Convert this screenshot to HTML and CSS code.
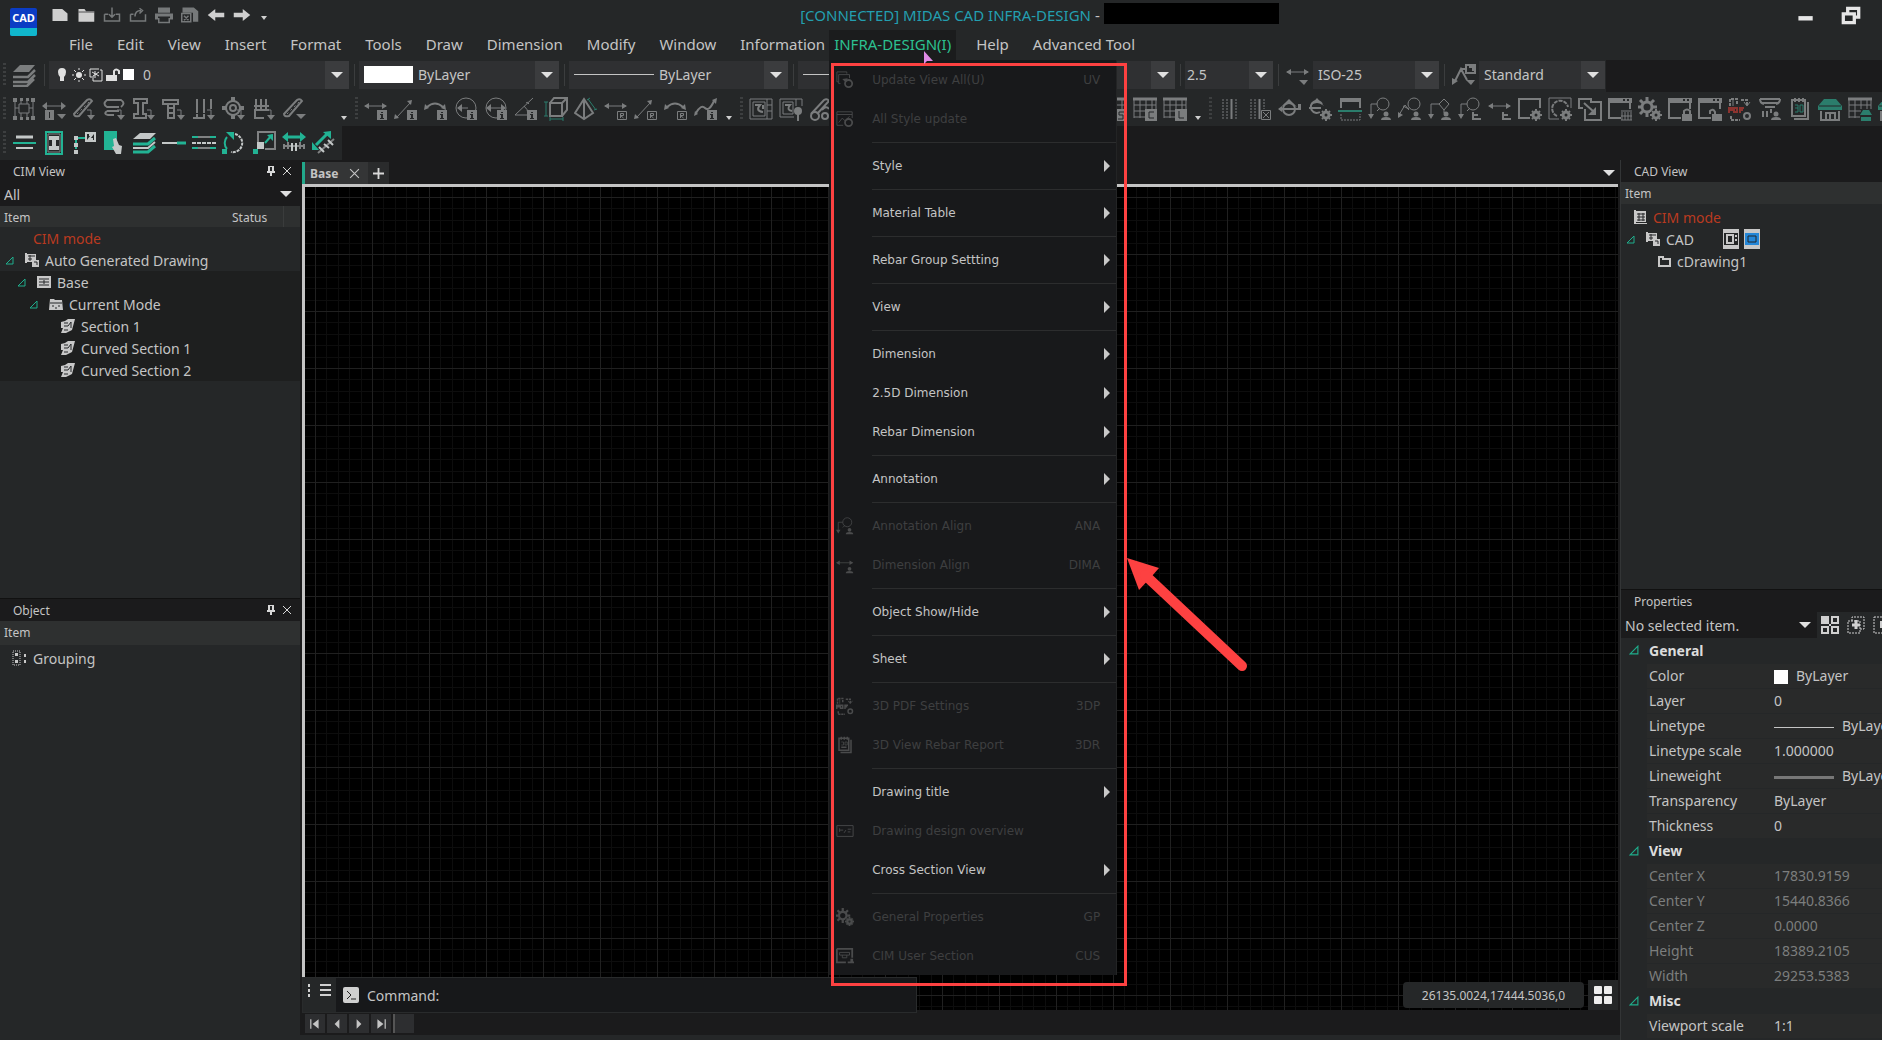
FILE: index.html
```
<!DOCTYPE html>
<html lang="en">

<head>
  <meta charset="UTF-8" />
  <meta name="viewport" content="width=device-width, initial-scale=1.0" />
  <title>MIDAS CAD INFRA-DESIGN</title>
  <link rel="stylesheet" href="styles.css">
</head>

<body>
  <!-- icon sprite -->
  <svg class="sprite" width="0" height="0" aria-hidden="true">
    <!-- small badges, drawn in the bottom right corner of other icons -->
    <symbol id="b-info" viewBox="0 0 24 24"><path class="fill" d="M13 13h10v10H13z"/><path class="hole" d="M17 15h2v1h-2zM16 17h3v4h1v1h-4v-1h1v-3h-1z"/></symbol>
    <symbol id="b-r" viewBox="0 0 24 24"><path d="M13.5 14.5h9v8h-9z"/><path d="M16.500 21v-4.500h3v2h-3l3 2.500"/></symbol>
    <symbol id="b-down" viewBox="0 0 24 24"><path d="M15 13h4v8"/><path class="fill" d="M15 18h8l-4 5z"/></symbol>
    <symbol id="b-gear" viewBox="0 0 24 24"><circle class="hole" cx="18" cy="18" r="6"/><circle cx="18" cy="18" r="3" stroke-width="3"/><path stroke-width="2" d="M18 12v2M18 22v2M12 18h2M22 18h2M14 14l1 1M21 21l1 1M22 14l-1 1M15 21l-1 1"/></symbol>
    <symbol id="b-user" viewBox="0 0 24 24"><circle class="fill" cx="18" cy="17" r="2.500"/><path class="fill" d="M13 23q0-3 5-3t5 3z"/></symbol>
    <symbol id="b-align" viewBox="0 0 24 24"><path stroke-width="2" d="M15 15v8M15 18h5M15 22h8"/></symbol>
    <symbol id="b-lock" viewBox="0 0 24 24"><path class="fill" d="M14 17h10v7H14z"/><path stroke-width="2" d="M16 17v-3q3-3 6 0v3"/></symbol>

    <!-- toolbar icons -->
    <symbol id="layers" viewBox="0 0 24 24"><path class="fill" d="M8 2h15l-6 7H1z"/><path stroke-width="2.500" d="M1 14h15l7-7M1 19h15l7-7M1 23h14l7-7"/></symbol>
    <symbol id="frame" viewBox="0 0 24 24"><path d="M3 3v19M21 3v19M9 2v5M15 2v5M9 16v6M15 16v6M3 11h4M17 11h4M7 7h10v9H7z"/><path class="fill" d="M1 1h4v4H1zM19 1h4v4h-4zM1 19h4v4H1zM19 19h4v4h-4zM8 1h3v3H8zM14 1h3v3h-3zM8 20h3v3H8zM14 20h3v3h-3z"/></symbol>
    <symbol id="dim" viewBox="0 0 24 24"><path d="M2 9h20"/><path class="fill" d="M0 9l5-4v8zM24 9l-5-4v8z"/></symbol>
    <symbol id="dim-thin" viewBox="0 0 24 24"><path d="M1 9h21"/><path class="fill" d="M0 9l5-3v6zM23 9l-5-3v6z"/></symbol>
    <symbol id="diag" viewBox="0 0 24 24"><path d="M3 20L17 5"/><path class="fill" d="M0 22l1-5 4 4zM18 3l-1 5-4-4z"/></symbol>
    <symbol id="arc" viewBox="0 0 24 24"><path stroke-width="2" d="M3 10q8-7 16 0"/><path class="fill" d="M0 13l1-6 4 4zM22 13l-1-6-4 4z"/></symbol>
    <symbol id="radius" viewBox="0 0 24 24"><circle cx="12" cy="11" r="10"/><path d="M4 11h10"/><path class="fill" d="M3 11l5-4v8z"/></symbol>
    <symbol id="diameter" viewBox="0 0 24 24"><circle cx="12" cy="11" r="10"/><path d="M4 11h16"/><path class="fill" d="M2 11l5-4v8zM22 11l-5-4v8z"/></symbol>
    <symbol id="angle" viewBox="0 0 24 24"><path d="M19 1L1 18h14M10 9q4 3 4 8M15 7q-2-3-3-1"/></symbol>
    <symbol id="cube" viewBox="0 0 24 24"><path stroke-width="2" d="M6 6h12v13H6zM6 6l4-5h13l-5 5M23 1v12l-5 6"/><path class="green" d="M2 5v14M0 5h4M0 19h4M6 22h13M6 20v4M19 20v4"/></symbol>
    <symbol id="pyramid" viewBox="0 0 24 24"><path stroke-width="2" d="M10 2L1 16l9 6 9-6zM10 2v20"/><path class="green" d="M14 2l8 11M13 3l3-2M20 13l3-1"/></symbol>
    <symbol id="spline" viewBox="0 0 24 24"><path stroke-width="2" d="M2 16q5-9 9-5t9-7"/><path class="fill" d="M0 19l1-5 3 3zM23 1l-1 6-4-4z"/></symbol>
    <symbol id="bar" viewBox="0 0 24 24"><path stroke-width="2" d="M2 17L15 3q3-2 5 1L7 19q-5 1-5-2z"/><path stroke-dasharray="2 3" d="M5 17L18 4"/></symbol>
    <symbol id="loop" viewBox="0 0 24 24"><path stroke-width="2" d="M17 10H5q-5-3 0-7h14q5 3 0 7M5 14h12M5 14q-4 3 1 4h6"/></symbol>
    <symbol id="ibeam" viewBox="0 0 24 24"><path stroke-width="2" d="M2 2h13v4h-4v11h3v4H2v-4h4V6H2z"/></symbol>
    <symbol id="tbeam" viewBox="0 0 24 24"><path stroke-width="2" d="M1 3h15v4H1zM6 7v14h6V7M6 11h6M6 16h6"/></symbol>
    <symbol id="posts" viewBox="0 0 24 24"><path stroke-width="2" d="M5 2v14M12 2v14M19 2v10M1 21h12M5 17v3M12 17v3"/></symbol>
    <symbol id="target" viewBox="0 0 24 24"><circle cx="11" cy="11" r="7" stroke-width="2"/><circle cx="11" cy="11" r="3" stroke-width="2"/><path class="fill" d="M9 0h4v4H9zM0 9h4v4H0zM9 18h4v4H9zM18 9h4v4h-4z"/></symbol>
    <symbol id="comb" viewBox="0 0 24 24"><path stroke-width="2" d="M2 9h15M2 13h15M4 2v10M9 2v10M14 2v10M3 14v7h9"/></symbol>
    <symbol id="view" viewBox="0 0 24 24"><path d="M1 2h22v20H1zM4 5h12v14H4zM18 2v20M18 8h5M18 14h5"/><path stroke-width="2" d="M6 8h5q-5 6 3 7M14 8v4"/></symbol>
    <symbol id="view-pin" viewBox="0 0 24 24"><path d="M15 20H1V2h22v7M4 5h10v12H4zM17 2v7"/><path stroke-width="2" d="M6 8h5q-4 5 2 6"/><circle class="fill" cx="19" cy="14" r="4"/><path class="fill" d="M18 17h2v7h-2z"/></symbol>
    <symbol id="tools" viewBox="0 0 24 24"><path stroke-width="2" d="M2 17L15 3q3-2 5 1L8 17M13 13q4-5 7-1"/><circle cx="6" cy="19" r="4" stroke-width="2"/><circle cx="16" cy="19" r="3" stroke-width="2"/></symbol>
    <symbol id="table" viewBox="0 0 24 24"><path stroke-width="3" d="M0 2h24"/><path d="M1 2v19M7 3v18M13 3v9M19 3v9M23 3v9M1 8h22M1 14h12M1 20h11"/></symbol>
    <symbol id="table-s" viewBox="0 0 24 24"><path class="fill" d="M12 12h12v12H12z"/><path class="holeline" d="M21 15h-5v3h4v4h-5"/></symbol>
    <symbol id="table-c" viewBox="0 0 24 24"><path class="fill" d="M12 12h12v12H12z"/><path class="holeline" d="M21 15h-5v6h5"/></symbol>
    <symbol id="table-l" viewBox="0 0 24 24"><path class="fill" d="M12 12h12v12H12z"/><path class="holeline" d="M16 14v7h5"/></symbol>
    <symbol id="hatch" viewBox="0 0 24 24"><path stroke-dasharray="2 1" d="M5 2v20M9 2v20M18 2v20"/><path stroke-width="2" d="M13.500 2v20"/></symbol>
    <symbol id="hatch-x" viewBox="0 0 24 24"><path stroke-dasharray="2 1" d="M3 2v20M7 2v20M16 2v10"/><path stroke-width="2" d="M11.500 2v20"/><path d="M13.500 13.500h9v9h-9zM15 15l6 6M21 15l-6 6"/></symbol>
    <symbol id="section" viewBox="0 0 24 24"><circle cx="11" cy="12" r="6" stroke-width="2"/><path stroke-width="2" d="M1 12h21"/><path class="fill" d="M3 10l8-8 8 8q-8-6-16 0zM0 12l4-3v6zM20 7h3v6h-3z"/></symbol>
    <symbol id="section-g" viewBox="0 0 24 24"><path stroke-width="2" d="M14 7a6 6 0 1 0-2 8M1 11h12"/><path class="fill" d="M2 9l7-8 7 8q-7-6-14 0z"/></symbol>
    <symbol id="window-cut" viewBox="0 0 24 24"><path stroke-width="4" d="M2 3h21"/><path stroke-width="2" d="M3 4v7M22 4v7"/><path class="green" stroke-width="2" d="M0 14h24"/><path stroke-dasharray="2 1" d="M3 17v6h19v-6"/></symbol>
    <symbol id="callout" viewBox="0 0 24 24"><circle cx="15" cy="7" r="6"/><path d="M9 7H3v12M9 14l3-3"/><path class="fill" d="M0 17h6l-3 5z"/></symbol>
    <symbol id="callout-2" viewBox="0 0 24 24"><circle cx="16" cy="7" r="6"/><path d="M1 18l6-10 4 5M11 12L5 9"/><path class="fill" d="M0 21v-6l5 3z"/></symbol>
    <symbol id="callout-3" viewBox="0 0 24 24"><path d="M16 2l5 5-5 6-5-6zM11 7H3v12M16 13v3"/><path class="fill" d="M0 17h6l-3 5z"/></symbol>
    <symbol id="window" viewBox="0 0 24 24"><path stroke-width="2" d="M12 21H1V2h21v9"/></symbol>
    <symbol id="window-o" viewBox="0 0 24 24"><path d="M11 22H1V1h22v10"/><path stroke-width="2" stroke-dasharray="4 1" d="M9 19a8 8 0 1 1 11-9"/></symbol>
    <symbol id="expand" viewBox="0 0 24 24"><path stroke-width="2" d="M5 11H1V2h12v3h10v18H7V12M6 6l10 9"/><path class="fill" d="M18 10v8h-8z"/></symbol>
    <symbol id="titlewin" viewBox="0 0 24 24"><path class="fill" d="M0 1h24v5H0z"/><path stroke-width="2" d="M1 5v16h12M22 5v7"/><path class="hole" d="M15 2h2v2h-2zM19 2h2v2h-2z"/></symbol>
    <symbol id="b-table" viewBox="0 0 24 24"><path d="M13 14h11M14 15v8M17 15v8M20 15v8M23 15v8M13 19h11M13 23h11"/></symbol>
    <symbol id="gears" viewBox="0 0 24 24"><circle cx="9" cy="10" r="5" stroke-width="3"/><path stroke-width="3" d="M9 0v4M9 16v4M0 10h3M15 10h4M2 3l3 3M13 6l3-3M2 17l3-3"/></symbol>
    <symbol id="b-unlock" viewBox="0 0 24 24"><path class="fill" d="M14 17h10v7H14z"/><path stroke-width="2" d="M12 17v-3q3-3 5 1v2"/></symbol>
    <symbol id="pdf" viewBox="0 0 24 24"><path stroke-dasharray="3 1" stroke-width="2" d="M2 9V2h7v5M13 3h6v6M3 19v4h9"/><path d="M5 3v6M16 5l3 4 3-4"/><path class="red" stroke-width="2" d="M1 16v-5h3v2H1M6 11v4h3v-4zM12 16v-5h4M12 13h3"/><circle cx="19" cy="19" r="3" stroke-width="2"/></symbol>
    <symbol id="column" viewBox="0 0 24 24"><path stroke-width="2" d="M2 2h20M4 6h16M2 2q0 4 4 5M22 2q0 4-4 5M7 10h10M5 14v6M9 14v6M13 12v4"/></symbol>
    <symbol id="book" viewBox="0 0 24 24"><path stroke-width="2" d="M4 3h13v16H4zM20 5v17H6M7 1v4M11 1v4M15 1v4"/><path class="green" d="M7 8h3v7H7M7 11h3M12 8h3v7h-3z"/></symbol>
    <symbol id="book-plain" viewBox="0 0 24 24"><path stroke-width="2" d="M4 3h13v16H4zM20 5v17H6M7 1v4M11 1v4M15 1v4M7 15h7"/><path d="M7 8h3v4H7M12 8h3v4h-3z"/></symbol>
    <symbol id="building" viewBox="0 0 24 24"><path class="greenfill" d="M6 2h12l6 7v4H0V9z"/><path class="holeline" d="M1 9h22"/><path stroke-width="2" d="M3 14v9h18v-9M8 23v-7h4v7M12 16h5v7"/></symbol>
    <symbol id="b-roof" viewBox="0 0 24 24"><path class="greenfill" d="M15 13h6l3 5H12zM13 20h10v4H13z"/></symbol>

    <!-- green toolbar -->
    <symbol id="g-lines" viewBox="0 0 24 24"><path class="white" stroke-width="3" d="M4 6h17"/><path class="green" stroke-width="2" d="M1 12h23"/><path class="white" stroke-width="2" d="M4 17h17"/></symbol>
    <symbol id="g-ibeam" viewBox="0 0 24 24"><path class="green" stroke-width="2" d="M4 1h16v22H4z"/><path d="M6 3h12v18H6z"/><path class="whitefill" d="M7 5h10v4h-3v6h3v4H7v-4h3V9H7z"/></symbol>
    <symbol id="g-node" viewBox="0 0 24 24"><path class="white" stroke-width="2" d="M14 2h9v8h-9zM17 4h3l-3 4h4"/><path class="green" stroke-width="2" d="M13 7H4v11"/><path class="whitefill" d="M2 5h4v4H2zM2 12h4v4H2zM2 19h4v4H2z"/></symbol>
    <symbol id="g-pick" viewBox="0 0 24 24"><path class="greenfill" d="M2 0h13v19H2z"/><path class="whitefill" d="M11 8l3-1 3 7 3 1-1 8h-5l-4-7 2-1z"/></symbol>
    <symbol id="g-layers" viewBox="0 0 24 24"><path class="whitefill" d="M8 2h16l-6 6H1z"/><path class="green" stroke-width="3" d="M1 13h15l7-6M1 21h15l7-6"/><path class="white" stroke-width="2" d="M1 17h15l7-6"/></symbol>
    <symbol id="g-line" viewBox="0 0 24 24"><path class="white" stroke-width="2" d="M0 12h15"/><path class="green" stroke-width="3" d="M15 12h9"/></symbol>
    <symbol id="g-rows" viewBox="0 0 24 24"><path class="green" stroke-width="2" d="M0 6h6M18 6h6M0 17h6M18 17h6"/><path stroke-width="2" d="M6 6h12M6 17h12"/><path class="white" stroke-width="2" stroke-dasharray="4 1" d="M0 12h24"/></symbol>
    <symbol id="g-rotate" viewBox="0 0 24 24"><path class="green" stroke-width="2" d="M5 18A9 9 0 0 1 5 6"/><path class="white" stroke-width="2" stroke-dasharray="3 1" d="M13 3a9 9 0 0 1-4 18"/><path class="greenfill" d="M4 1h8v8zM0 18h5v5H0z"/></symbol>
    <symbol id="g-scale" viewBox="0 0 24 24"><path stroke-width="2" d="M6 11V1h17v17H13"/><path class="green" stroke-width="2" d="M13 12l7-8"/><path class="greenfill" d="M21 3v7l-6-6zM1 18h5v5H1z"/><path class="whitefill" d="M5 11h7v7H5z"/></symbol>
    <symbol id="g-dim" viewBox="0 0 24 24"><path class="green" stroke-width="3" d="M4 6h16"/><path class="greenfill" d="M0 6l6-5v10zM24 6l-6-5v10z"/><path stroke-width="2" d="M2 13v5M6 11v7M18 11v7M22 13v5M1 15h22"/><path class="white" stroke-width="2" d="M10 12v8M14 12v8"/></symbol>
    <symbol id="g-slope" viewBox="0 0 24 24"><path class="green" stroke-width="3" d="M4 14L15 3"/><path class="greenfill" d="M19 0v8l-8-7zM0 11v8h7z"/><path stroke-width="2" d="M6 22L22 8"/><path class="white" stroke-width="2" d="M7 16l5 5M12 13l5 4M16 9l5 5"/></symbol>

    <!-- quick access, tree and panel icons -->
    <symbol id="doc" viewBox="0 0 24 24"><path class="fill" d="M2 4h13l7 6v10H2z"/></symbol>
    <symbol id="folder" viewBox="0 0 24 24"><path class="fill" d="M2 4h8l2 3h11v14H2z"/><path class="holeline" d="M2 8h21"/></symbol>
    <symbol id="save" viewBox="0 0 24 24"><path stroke-width="2" d="M2 11v9h20v-9h-5M2 11h5M12 2v12M8 11l4 4 4-4"/></symbol>
    <symbol id="save-as" viewBox="0 0 24 24"><path stroke-width="2" d="M2 11v9h20v-9M2 11h4M8 14q0-8 8-8M14 3l4 3-4 4"/></symbol>
    <symbol id="print" viewBox="0 0 24 24"><path class="fill" d="M4 2h16v7H4zM0 10h24v8h-4v-4H4v4H0z"/><path stroke-width="2" d="M5 16v6h14v-6"/></symbol>
    <symbol id="prints" viewBox="0 0 24 24"><path class="fill" d="M2 2h15l6 5v14h-7V9H2z"/><path stroke-width="2" d="M1 10h12v11H1zM4 13l6 6M10 13l-6 6"/></symbol>
    <symbol id="undo" viewBox="0 0 24 24"><path class="fill" d="M1 12L11 4v5h12v6H11v5z"/></symbol>
    <symbol id="redo" viewBox="0 0 24 24"><path class="fill" d="M23 12L13 4v5H1v6h12v5z"/></symbol>
    <symbol id="bulb" viewBox="0 0 14 14"><path class="fill" d="M7 0a4 4 0 0 1 4 4q0 3-2 5v4H5V9Q3 7 3 4a4 4 0 0 1 4-4z"/></symbol>
    <symbol id="sun" viewBox="0 0 14 14"><circle class="fill" cx="7" cy="7" r="3"/><path d="M7 0v2M7 12v2M0 7h2M12 7h2M2 2l2 2M10 10l2 2M12 2l-2 2M2 12l2-2"/></symbol>
    <symbol id="freeze" viewBox="0 0 14 14"><path d="M11 2h2v11H4v-3M10 1H1v8h4"/><path d="M6 3v7M3 4l7 4M10 4L4 8"/></symbol>
    <symbol id="unlock" viewBox="0 0 14 14"><path class="fill" d="M0 7h11v6H0z"/><path stroke-width="2" d="M8 7V3q2-3 5 0v3"/></symbol>
    <symbol id="pin" viewBox="0 0 10 10"><path class="fill" d="M2 0h6v5h1v2H1V5h1zM4 7h2v3H4z"/><path class="hole" d="M4 1h2v4H4z"/></symbol>
    <symbol id="cross" viewBox="0 0 10 10"><path d="M1 1l8 8M9 1L1 9"/></symbol>
    <symbol id="plus" viewBox="0 0 12 12"><path stroke-width="2" d="M6 0v12M0 6h12"/></symbol>
    <symbol id="t-drawings" viewBox="0 0 16 16"><path class="fill" d="M1 1h2v10H1zM3 2h9v8H3z"/><path class="fill" d="M8 8h7v7H8z"/><path class="holeline" d="M4 4h7M4 7h4M6 3v6M10 10h3v3"/></symbol>
    <symbol id="t-grid" viewBox="0 0 16 16"><path class="fill" d="M1 2h14v12H1z"/><path class="holeline" d="M3 5h4M9 5h4M3 8h10M3 11h4M9 11h4M8 4v8"/></symbol>
    <symbol id="t-mode" viewBox="0 0 16 16"><path class="fill" d="M2 3h4l1 1h7l1 10H1z"/><path class="holeline" d="M2 7h12M4 10h2M7 12h2M10 10h2"/></symbol>
    <symbol id="t-section" viewBox="0 0 16 16"><path class="fill" d="M1 4l4-1 3-2h7l-3 11-6 3H1l2-5H1z"/><path class="holeline" d="M4 5h4M4 8h4l3-4M4 12h4M11 4v6"/></symbol>
    <symbol id="t-folder" viewBox="0 0 16 16"><path stroke-width="2" d="M3 4h4v2h7v7H3z"/></symbol>
    <symbol id="t-list" viewBox="0 0 16 16"><path class="fill" d="M2 1h2v13h11v1H2zM4 2h10v11H4z"/><path class="holeline" d="M5 5h8M5 8h8M5 11h8M7 4v8M11 4v8"/></symbol>
    <symbol id="t-group" viewBox="0 0 16 16"><path stroke-dasharray="1 1" d="M1 1h7v14H1z"/><path class="fill" d="M3 3h3v3H3zM3 10h3v3H3zM12 4h2v3h-2zM12 10h2v3h-2z"/></symbol>
    <symbol id="toggle" viewBox="0 0 9 9"><path class="green" d="M8 1v7H1z"/></symbol>
    <symbol id="quick-select" viewBox="0 0 18 18"><path d="M1 1h6v6H1zM11 1h6v6h-6zM1 11h6v6H1zM11 11h6v6h-6z" stroke-width="2"/><path class="fill" d="M1 1h6v6H1zM8 8h2v2H8z"/></symbol>
    <symbol id="add-select" viewBox="0 0 18 18"><path stroke-dasharray="2 1" d="M1 5h12v12H1zM5 5V1h12v12h-4"/><path stroke-width="3" d="M9 4v9M5 9h8"/></symbol>
    <symbol id="pick-select" viewBox="0 0 18 18"><path stroke-dasharray="2 1" d="M1 1h16v16H1z"/><path class="fill" d="M7 5h8v7H7z"/></symbol>
    <symbol id="first" viewBox="0 0 10 10"><path class="fill" d="M1 1h1v8H1zM8 1v8L3 5z"/></symbol>
    <symbol id="prev" viewBox="0 0 10 10"><path class="fill" d="M7 1v8L3 5z"/></symbol>
    <symbol id="next" viewBox="0 0 10 10"><path class="fill" d="M3 1v8l4-4z"/></symbol>
    <symbol id="last" viewBox="0 0 10 10"><path class="fill" d="M2 1v8l5-4zM8 1h1v8H8z"/></symbol>

    <!-- menu icons -->
    <symbol id="m-update" viewBox="0 0 20 20"><path d="M3 12H1V1h11v2M5 14H3V4h12v4"/><circle cx="14" cy="14" r="4" stroke-width="2"/><path class="fill" d="M7 9l6-1-2 5z"/></symbol>
    <symbol id="m-style" viewBox="0 0 20 20"><path d="M8 17H1V2h17v7M1 5h17M3 14l4-5 3 3 5-5"/><circle cx="14" cy="14" r="4" stroke-width="2"/></symbol>
    <symbol id="m-overview" viewBox="0 0 20 20"><path d="M1 4h18v12H1zM4 7v4M4 9h4M9 12l2-3M13 8h4M13 11h3"/></symbol>
    <symbol id="m-user" viewBox="0 0 20 20"><path stroke-width="2" d="M1 2h18M1 2v15h10M18 2v10"/><path d="M4 6h11v3H4zM7 9v3h5V9"/><path class="fill" d="M13 16h7v2h-7zM16 13h3v3h-3z"/></symbol>
  </svg>

  <div class="app">
    <!-- title bar -->
    <header class="titlebar">
      <div class="logo"><span>CAD</span><i></i></div>
      <div class="quick">
        <button aria-label="New"><svg><use href="#doc"/></svg></button>
        <button aria-label="Open"><svg><use href="#folder"/></svg></button>
        <button class="dim" aria-label="Save"><svg><use href="#save"/></svg></button>
        <button class="dim" aria-label="Save as"><svg><use href="#save-as"/></svg></button>
        <button class="dim" aria-label="Print"><svg><use href="#print"/></svg></button>
        <button class="dim" aria-label="Batch print"><svg><use href="#prints"/></svg></button>
        <button aria-label="Undo"><svg><use href="#undo"/></svg></button>
        <button aria-label="Redo"><svg><use href="#redo"/></svg></button>
        <button class="more" aria-label="More"></button>
      </div>
      <h1 class="title"><span>[CONNECTED] MIDAS CAD INFRA-DESIGN</span> - <b class="masked"></b></h1>
      <div class="winbuttons">
        <button aria-label="Minimize"><svg viewBox="0 0 20 20"><path stroke-width="4" d="M4 13h13"/></svg></button>
        <button aria-label="Restore"><svg viewBox="0 0 20 20"><path stroke-width="3" d="M3 9h10v8H3zM7 8V4h10v8h-4"/></svg></button>
      </div>
    </header>

    <nav class="menubar">
      <ul>
        <li><button>File</button></li>
        <li><button>Edit</button></li>
        <li><button>View</button></li>
        <li><button>Insert</button></li>
        <li><button>Format</button></li>
        <li><button>Tools</button></li>
        <li><button>Draw</button></li>
        <li><button>Dimension</button></li>
        <li><button>Modify</button></li>
        <li><button>Window</button></li>
        <li><button>Information</button></li>
        <li class="open">
          <button>INFRA-DESIGN(I)</button>
          <svg class="cursor" viewBox="0 0 10 14"><path d="M0 0v13l3-3h6z"/></svg>
          <ul class="dropdown">
            <li><button disabled><svg><use href="#m-update"/></svg>Update View All(U)<kbd>UV</kbd></button></li>
            <li><button disabled><svg><use href="#m-style"/></svg>All Style update</button></li>
            <li class="sep"></li>
            <li><button class="sub">Style</button></li>
            <li class="sep"></li>
            <li><button class="sub">Material Table</button></li>
            <li class="sep"></li>
            <li><button class="sub">Rebar Group Settting</button></li>
            <li class="sep"></li>
            <li><button class="sub">View</button></li>
            <li class="sep"></li>
            <li><button class="sub">Dimension</button></li>
            <li><button class="sub">2.5D Dimension</button></li>
            <li><button class="sub">Rebar Dimension</button></li>
            <li class="sep"></li>
            <li><button class="sub">Annotation</button></li>
            <li class="sep"></li>
            <li><button disabled><svg viewBox="0 0 24 24"><use href="#callout"/><use href="#b-user"/></svg>Annotation Align<kbd>ANA</kbd></button></li>
            <li><button disabled><svg viewBox="0 0 24 24"><use href="#dim-thin"/><use href="#b-user"/></svg>Dimension Align<kbd>DIMA</kbd></button></li>
            <li class="sep"></li>
            <li><button class="sub">Object Show/Hide</button></li>
            <li class="sep"></li>
            <li><button class="sub">Sheet</button></li>
            <li class="sep"></li>
            <li><button disabled><svg><use href="#pdf"/></svg>3D PDF Settings<kbd>3DP</kbd></button></li>
            <li><button disabled><svg><use href="#book-plain"/></svg>3D View Rebar Report<kbd>3DR</kbd></button></li>
            <li class="sep"></li>
            <li><button class="sub">Drawing title</button></li>
            <li><button disabled><svg><use href="#m-overview"/></svg>Drawing design overview</button></li>
            <li><button class="sub">Cross Section View</button></li>
            <li class="sep"></li>
            <li><button disabled><svg viewBox="0 0 24 24"><use href="#gears"/><use href="#b-gear"/></svg>General Properties<kbd>GP</kbd></button></li>
            <li><button disabled><svg><use href="#m-user"/></svg>CIM User Section<kbd>CUS</kbd></button></li>
          </ul>
          <!-- callout frame and arrow round the menu -->
          <div class="highlight">
            <svg viewBox="0 0 120 118"><path class="head" d="M0 0l32 10-7 8-13 14z"/><path class="shaft" d="M18 17l97 91"/></svg>
          </div>
        </li>
        <li><button>Help</button></li>
        <li><button>Advanced Tool</button></li>
      </ul>
    </nav>

    <!-- property toolbar -->
    <div class="toolbar props">
      <i class="grip"></i>
      <button aria-label="Layers"><svg><use href="#layers"/></svg></button>
      <i class="line"></i>
      <label class="combo layer">
        <svg><use href="#bulb"/></svg><svg><use href="#sun"/></svg><svg><use href="#freeze"/></svg><svg><use href="#unlock"/></svg><i class="swatch"></i>
        <select aria-label="Layer"><option>0</option></select><i class="drop"></i>
      </label>
      <i class="line"></i>
      <label class="combo color"><i class="swatch wide"></i><select aria-label="Color"><option>ByLayer</option></select><i class="drop"></i></label>
      <i class="line"></i>
      <label class="combo linetype"><i class="stroke"></i><select aria-label="Linetype"><option>ByLayer</option></select><i class="drop"></i></label>
      <i class="line"></i>
      <label class="combo weight"><i class="stroke"></i><select aria-label="Lineweight"><option>ByLayer</option></select><i class="drop"></i></label>
      <i class="line"></i>
      <label class="combo height"><select aria-label="Text height"><option>2.5</option></select><i class="drop"></i></label>
      <i class="line"></i>
      <button aria-label="Dimension style"><svg><use href="#dim-thin"/><path class="fill" d="M13 17h9l-4 5z"/></svg></button>
      <label class="combo"><select aria-label="Dimension style"><option>ISO-25</option></select><i class="drop"></i></label>
      <i class="line"></i>
      <button aria-label="Leader style"><svg><path stroke-width="2" d="M3 18L9 6l6 11M9 6h6M14 2h9v8h-9zM17 4h4v4"/><path class="fill" d="M0 22v-7l6 3zM14 17h9l-4 5z"/></svg></button>
      <label class="combo"><select aria-label="Leader style"><option>Standard</option></select><i class="drop"></i></label>
    </div>

    <!-- drawing toolbar -->
    <div class="toolbar tools">
      <i class="grip"></i>
      <div class="group first">
        <button aria-label="Frame"><svg><use href="#frame"/></svg></button>
        <button aria-label="Dimension info"><svg><use href="#dim"/><path class="fill" d="M3 13h9v10H3zM15 17h9l-4 5z"/><path class="holeline" d="M7.500 15v6"/></svg></button>
        <button aria-label="Rebar"><svg><use href="#bar"/><use href="#b-down"/></svg></button>
        <button aria-label="Stirrup"><svg><use href="#loop"/><use href="#b-down"/></svg></button>
        <button aria-label="I section"><svg><use href="#ibeam"/><use href="#b-down"/></svg></button>
        <button aria-label="T section"><svg><use href="#tbeam"/><use href="#b-down"/></svg></button>
        <button aria-label="Piles"><svg><use href="#posts"/><use href="#b-down"/></svg></button>
        <button aria-label="Target"><svg><use href="#target"/><use href="#b-down"/></svg></button>
        <button aria-label="Footing"><svg><use href="#comb"/><use href="#b-down"/></svg></button>
        <button aria-label="Rebar edit"><svg><use href="#bar"/><path class="fill" d="M14 17h10l-5 5z"/></svg></button>
        <button class="more" aria-label="More"></button>
      </div>
      <i class="grip"></i>
      <div class="group">
        <button aria-label="Linear"><svg><use href="#dim-thin"/><use href="#b-info"/></svg></button>
        <button aria-label="Aligned"><svg><use href="#diag"/><use href="#b-info"/></svg></button>
        <button aria-label="Arc"><svg><use href="#arc"/><use href="#b-info"/></svg></button>
        <button aria-label="Radius"><svg><use href="#radius"/><use href="#b-info"/></svg></button>
        <button aria-label="Diameter"><svg><use href="#diameter"/><use href="#b-info"/></svg></button>
        <button aria-label="Angle"><svg><use href="#angle"/><use href="#b-info"/></svg></button>
        <button aria-label="Box"><svg><use href="#cube"/></svg></button>
        <button aria-label="Pyramid"><svg><use href="#pyramid"/></svg></button>
        <button aria-label="Rebar linear"><svg><use href="#dim-thin"/><use href="#b-r"/></svg></button>
        <button aria-label="Rebar aligned"><svg><use href="#diag"/><use href="#b-r"/></svg></button>
        <button aria-label="Rebar arc"><svg><use href="#arc"/><use href="#b-r"/></svg></button>
        <button aria-label="Spline"><svg><use href="#spline"/><use href="#b-info"/></svg></button>
        <button class="more" aria-label="More"></button>
      </div>
      <i class="grip"></i>
      <div class="group views">
        <button aria-label="View"><svg><use href="#view"/></svg></button>
        <button aria-label="Pin view"><svg><use href="#view-pin"/></svg></button>
        <button aria-label="Edit view"><svg><use href="#tools"/></svg></button>
        <button class="push" aria-label="Table S"><svg><use href="#table"/><use href="#table-s"/></svg></button>
        <button aria-label="Table C"><svg><use href="#table"/><use href="#table-c"/></svg></button>
        <button aria-label="Table L"><svg><use href="#table"/><use href="#table-l"/></svg></button>
        <button class="more" aria-label="More"></button>
      </div>
      <i class="grip"></i>
      <div class="group">
        <button aria-label="Hatch"><svg><use href="#hatch"/></svg></button>
        <button aria-label="Remove hatch"><svg><use href="#hatch-x"/></svg></button>
        <button aria-label="Section"><svg><use href="#section"/></svg></button>
        <button aria-label="Section settings"><svg><use href="#section-g"/><use href="#b-gear"/></svg></button>
        <button aria-label="Cut"><svg><use href="#window-cut"/></svg></button>
        <button aria-label="Callout"><svg><use href="#callout"/><use href="#b-user"/></svg></button>
        <button aria-label="Multi callout"><svg><use href="#callout-2"/><use href="#b-user"/></svg></button>
        <button aria-label="Diamond callout"><svg><use href="#callout-3"/><use href="#b-user"/></svg></button>
        <button aria-label="Annotation align"><svg><use href="#callout"/><use href="#b-align"/></svg></button>
        <button aria-label="Dimension align"><svg><use href="#dim-thin"/><use href="#b-align"/></svg></button>
        <button aria-label="View settings"><svg><use href="#window"/><use href="#b-gear"/></svg></button>
        <button aria-label="Detail settings"><svg><use href="#window-o"/><use href="#b-gear"/></svg></button>
        <button aria-label="Expand"><svg><use href="#expand"/></svg></button>
        <button aria-label="Sheet table"><svg><use href="#titlewin"/><use href="#b-table"/></svg></button>
        <button aria-label="Settings"><svg><use href="#gears"/><use href="#b-gear"/></svg></button>
        <button aria-label="Lock"><svg><use href="#titlewin"/><use href="#b-lock"/></svg></button>
        <button aria-label="Unlock"><svg><use href="#titlewin"/><use href="#b-unlock"/></svg></button>
        <button aria-label="3D PDF"><svg><use href="#pdf"/></svg></button>
        <button aria-label="Column"><svg><use href="#column"/><use href="#b-user"/></svg></button>
        <button aria-label="3D report"><svg><use href="#book"/></svg></button>
        <button aria-label="Building"><svg><use href="#building"/></svg></button>
        <button aria-label="Building table"><svg><use href="#table"/><use href="#b-roof"/></svg></button>
        <button aria-label="Building list"><svg><use href="#building"/></svg></button>
      </div>
    </div>

    <div class="toolbar modify">
      <i class="grip"></i>
      <div class="group">
        <button aria-label="Offset"><svg><use href="#g-lines"/></svg></button>
        <button aria-label="Section"><svg><use href="#g-ibeam"/></svg></button>
        <button aria-label="Node"><svg><use href="#g-node"/></svg></button>
        <button aria-label="Pick"><svg><use href="#g-pick"/></svg></button>
        <button aria-label="Layers"><svg><use href="#g-layers"/></svg></button>
        <button aria-label="Extend"><svg><use href="#g-line"/></svg></button>
        <button aria-label="Linetype"><svg><use href="#g-rows"/></svg></button>
        <button aria-label="Rotate"><svg><use href="#g-rotate"/></svg></button>
        <button aria-label="Scale"><svg><use href="#g-scale"/></svg></button>
        <button aria-label="Dimension"><svg><use href="#g-dim"/></svg></button>
        <button aria-label="Slope"><svg><use href="#g-slope"/></svg></button>
      </div>
    </div>

    <main class="workspace">
      <!-- left panels -->
      <aside class="side left">
        <section class="panel cim">
          <header><h2>CIM View</h2><button aria-label="Pin"><svg><use href="#pin"/></svg></button><button aria-label="Close"><svg><use href="#cross"/></svg></button></header>
          <label class="filter"><select aria-label="Filter"><option>All</option></select><i class="caret"></i></label>
          <div class="columns"><span>Item</span><span class="status">Status</span></div>
          <ul class="tree">
            <li class="mode">CIM mode</li>
            <li class="l1"><svg class="toggle"><use href="#toggle"/></svg><svg><use href="#t-drawings"/></svg>Auto Generated Drawing</li>
            <li class="l2"><svg class="toggle"><use href="#toggle"/></svg><svg><use href="#t-grid"/></svg>Base</li>
            <li class="l3"><svg class="toggle"><use href="#toggle"/></svg><svg><use href="#t-mode"/></svg>Current Mode</li>
            <li class="l4"><svg><use href="#t-section"/></svg>Section 1</li>
            <li class="l4"><svg><use href="#t-section"/></svg>Curved Section 1</li>
            <li class="l4"><svg><use href="#t-section"/></svg>Curved Section 2</li>
          </ul>
        </section>
        <section class="panel object">
          <header><h2>Object</h2><button aria-label="Pin"><svg><use href="#pin"/></svg></button><button aria-label="Close"><svg><use href="#cross"/></svg></button></header>
          <div class="columns"><span>Item</span></div>
          <ul class="tree plain">
            <li><svg><use href="#t-group"/></svg>Grouping</li>
          </ul>
        </section>
      </aside>

      <!-- drawing area -->
      <section class="drawing">
        <div class="tabs">
          <div class="tab"><button>Base</button><button aria-label="Close tab"><svg><use href="#cross"/></svg></button></div>
          <button class="add" aria-label="New tab"><svg><use href="#plus"/></svg></button>
          <button class="caret" aria-label="Tab list"></button>
        </div>
        <div class="canvas">
          <div class="command">
            <span class="handle"><i class="dots"></i><i class="bars"></i></span>
            <label for="cmd"><svg viewBox="0 0 16 16"><path d="M4 4l4 4-4 4M8 12h5"/></svg>Command:</label>
            <input id="cmd" type="text">
          </div>
          <div class="status">
            <output>26135.0024,17444.5036,0</output>
            <button aria-label="Layout"><i></i><i></i><i></i><i></i></button>
          </div>
        </div>
        <div class="pager">
          <button aria-label="First"><svg><use href="#first"/></svg></button>
          <button aria-label="Previous"><svg><use href="#prev"/></svg></button>
          <button aria-label="Next"><svg><use href="#next"/></svg></button>
          <button aria-label="Last"><svg><use href="#last"/></svg></button>
          <i class="track"></i>
        </div>
      </section>

      <!-- right panels -->
      <aside class="side right">
        <section class="panel cad">
          <header><h2>CAD View</h2></header>
          <div class="columns"><span>Item</span></div>
          <ul class="tree">
            <li class="mode"><svg><use href="#t-list"/></svg>CIM mode</li>
            <li class="l1"><svg class="toggle"><use href="#toggle"/></svg><svg><use href="#t-drawings"/></svg>CAD
              <span class="modes">
                <svg viewBox="0 0 16 20"><path class="fill" d="M0 0h16v20H0z"/><path class="hole" d="M1 4h14v12H1z"/><path stroke-width="2" d="M4 6h6v8H4z"/><path class="fill" d="M12 6h2v2h-2zM12 10h2v2h-2z"/></svg>
                <svg viewBox="0 0 16 20"><path class="fill" d="M0 0h16v20H0z"/><path class="blue" d="M1 4h14v12H1z"/><path class="holeline" d="M4 7h8v6H4z"/></svg>
              </span></li>
            <li class="l2"><svg><use href="#t-folder"/></svg>cDrawing1</li>
          </ul>
        </section>
        <section class="panel properties">
          <header><h2>Properties</h2></header>
          <div class="selection">
            <label><select aria-label="Selection"><option>No selected item.</option></select><i class="caret"></i></label>
            <button aria-label="Quick select"><svg><use href="#quick-select"/></svg></button>
            <button aria-label="Add to selection"><svg><use href="#add-select"/></svg></button>
            <button aria-label="Select objects"><svg><use href="#pick-select"/></svg></button>
          </div>
          <table>
            <colgroup><col class="gutter"><col class="name"><col></colgroup>
            <tbody>
              <tr class="group-head"><td><svg><use href="#toggle"/></svg></td><th colspan="2">General</th></tr>
              <tr><td></td><th>Color</th><td><i class="swatch"></i>ByLayer</td></tr>
              <tr><td></td><th>Layer</th><td>0</td></tr>
              <tr><td></td><th>Linetype</th><td><i class="stroke"></i>ByLayer</td></tr>
              <tr><td></td><th>Linetype scale</th><td>1.000000</td></tr>
              <tr><td></td><th>Lineweight</th><td><i class="stroke thick"></i>ByLayer</td></tr>
              <tr><td></td><th>Transparency</th><td>ByLayer</td></tr>
              <tr><td></td><th>Thickness</th><td>0</td></tr>
            </tbody>
            <tbody class="readonly">
              <tr class="group-head"><td><svg><use href="#toggle"/></svg></td><th colspan="2">View</th></tr>
              <tr><td></td><th>Center X</th><td>17830.9159</td></tr>
              <tr><td></td><th>Center Y</th><td>15440.8366</td></tr>
              <tr><td></td><th>Center Z</th><td>0.0000</td></tr>
              <tr><td></td><th>Height</th><td>18389.2105</td></tr>
              <tr><td></td><th>Width</th><td>29253.5383</td></tr>
            </tbody>
            <tbody>
              <tr class="group-head"><td><svg><use href="#toggle"/></svg></td><th colspan="2">Misc</th></tr>
              <tr><td></td><th>Viewport scale</th><td>1:1</td></tr>
            </tbody>
          </table>
        </section>
      </aside>
    </main>
  </div>
</body>

</html>
```
FILE: styles.css
```
* {
  margin: 0;
  padding: 0;
  box-sizing: border-box;
}

body {
  background: #1b1b1c;
  color: #c4c4c4;
  font: 14px "Noto Sans", sans-serif;
  overflow: hidden;
}

ul {
  list-style: none;
}

button,
select,
input {
  background: none;
  border: none;
  outline: none;
  color: inherit;
  font: inherit;
}

button {
  display: flex;
  align-items: center;
  justify-content: center;
  flex: none;
}

select {
  appearance: none;
  flex: 1;
  min-width: 0;
}

svg {
  flex: none;
  fill: none;
  stroke: currentColor;
}

/* shapes inside the icons */
.sprite {
  position: absolute;
}

.fill {
  fill: currentColor;
  stroke: none;
}

.hole {
  fill: #252728;
  stroke: none;
}

.holeline {
  stroke: #252728;
}

.blue {
  fill: #2487d8;
  stroke: none;
}

.green {
  stroke: var(--green, #1fae8c);
}

.greenfill {
  fill: var(--green, #1fae8c);
  stroke: none;
}

.white {
  stroke: #c4c8c8;
}

.whitefill {
  fill: #c4c8c8;
  stroke: none;
}

.red {
  stroke: var(--red, #8c3430);
}

.app {
  height: 100vh;
  display: flex;
  flex-direction: column;
}

/* title bar */
.titlebar {
  display: flex;
  height: 30px;
  background: #252728;
}

.logo {
  width: 27px;
  height: 28px;
  margin: 8px 10px 0 10px;
  background: #0b3cc4;
  border-radius: 2px;
  overflow: hidden;
  flex: none;
  z-index: 1;
}

.logo span {
  display: block;
  height: 20px;
  text-align: center;
  color: #fff;
  font: bold 11px/20px "Noto Sans", sans-serif;
}

.logo i {
  display: block;
  height: 8px;
  background: #10b6cc;
}

.quick {
  display: flex;
  align-items: center;
}

.quick button {
  width: 26px;
  height: 30px;
  color: #cfcfcf;
}

.quick button.dim {
  color: #76797a;
}

.quick svg {
  width: 18px;
  height: 18px;
}

.quick .more {
  width: 18px;
}

.more::after {
  content: "";
  border: 3px solid transparent;
  border-top: 4px solid #cfcfcf;
  margin-top: 8px;
}

.title {
  flex: 1;
  display: flex;
  justify-content: center;
  gap: 4px;
  padding-left: 12px;
  font: 15px/30px "Noto Sans", sans-serif;
}

.title span {
  color: #239fb0;
}

.masked {
  width: 175px;
  height: 21px;
  margin-top: 3px;
  background: #000;
}

.winbuttons {
  display: flex;
  gap: 24px;
  padding-right: 20px;
}

.winbuttons svg {
  width: 22px;
  height: 22px;
  color: #e6e6e6;
}

/* menu bar */
.menubar {
  height: 30px;
  background: #252728;
}

.menubar > ul {
  display: flex;
  padding-left: 57px;
}

.menubar > ul > li {
  position: relative;
}

.menubar > ul > li > button {
  height: 30px;
  padding: 0 12px 2px;
  font-size: 15px;
}

.menubar > ul > li.open {
  margin: 0 8px 0 -8px;
}

.menubar > ul > li.open > button {
  padding: 0 5px 2px;
  background: #1b1c1d;
  color: #2cc090;
}

.cursor {
  position: absolute;
  left: 95px;
  top: 21px;
  width: 10px;
  height: 14px;
  fill: #e08ae6;
  stroke: none;
  z-index: 4;
}

.dropdown {
  position: absolute;
  left: 0;
  top: 30px;
  width: 288px;
  background: #18191b;
  border-right: 1px solid #232425;
  z-index: 2;
}

.dropdown button {
  width: 100%;
  height: 39px;
  padding: 0 16px 0 43px;
  justify-content: flex-start;
  font: 12px "DejaVu Sans", sans-serif;
}

.dropdown button:disabled {
  color: #3e3f40;
}

.dropdown svg {
  width: 18px;
  height: 18px;
  margin: 0 18px 0 -36px;
  color: #4a4b4c;
  --green: #4a4b4c;
  --red: #4a4b4c;
}

.dropdown kbd {
  margin-left: auto;
  font: inherit;
}

.dropdown .sub::after {
  content: "";
  margin: 0 -10px 0 auto;
  border: 6px solid transparent;
  border-left: 6px solid #c8c8c8;
  border-right: none;
}

.sep {
  height: 8px;
  margin-left: 43px;
  border-top: 4px solid #18191b;
  border-bottom: 3px solid #18191b;
  background: #2c2d2e;
}

.highlight {
  position: absolute;
  left: 2px;
  top: 33px;
  width: 296px;
  height: 923px;
  border: 3px solid #fd4141;
  pointer-events: none;
  z-index: 3;
}

.highlight svg {
  position: absolute;
  left: 293px;
  top: 492px;
  width: 120px;
  height: 118px;
}

.head {
  fill: #fd4141;
  stroke: none;
}

.shaft {
  stroke: #fd4141;
  stroke-width: 10px;
  stroke-linecap: round;
}

/* toolbars */
.toolbar {
  display: flex;
  align-items: center;
  color: #7b7d7e;
  background: #252728;
  --green: #2b7d6c;
}

.toolbar svg {
  width: 24px;
  height: 24px;
}

.grip {
  flex: none;
  width: 3px;
  height: 24px;
  margin: 0 3px;
  background: repeating-linear-gradient(#3d3f40 0 2px, #252728 2px 4px);
}

.line {
  flex: none;
  width: 1px;
  height: 22px;
  margin: 0 4px 0 5px;
  background: #3b3d3e;
}

.group {
  display: flex;
  flex: none;
}

.group button {
  width: 30px;
  height: 34px;
}

.props {
  height: 32px;
  width: 1606px;
  padding-bottom: 3px;
}

.props > button {
  width: 30px;
}

.combo {
  display: flex;
  align-items: center;
  flex: none;
  width: 126px;
  height: 28px;
  background: #2f3032;
  color: #c4c4c4;
}

.combo select {
  height: 28px;
  padding-left: 5px;
}

.combo svg {
  width: 14px;
  height: 14px;
  margin-right: 3px;
  color: #e0e0e0;
}

.combo.layer {
  width: 300px;
  padding-left: 6px;
}

.combo.color {
  width: 200px;
  padding-left: 5px;
}

.combo.linetype {
  width: 219px;
  padding-left: 5px;
}

.combo.weight {
  width: 377px;
  padding-left: 5px;
}

.combo.height {
  width: 88px;
}

.combo.height select {
  padding-left: 2px;
}

.swatch {
  flex: none;
  width: 11px;
  height: 11px;
  margin-right: 4px;
  background: #fff;
}

.swatch.wide {
  width: 49px;
  height: 17px;
  margin: 0;
}

.stroke {
  flex: none;
  width: 80px;
  height: 1px;
  background: #c4c4c4;
}

.drop {
  display: flex;
  align-items: center;
  justify-content: center;
  width: 24px;
  height: 28px;
  background: #3b3c3e;
}

.caret {
  display: flex;
  align-items: center;
  justify-content: center;
}

.drop::after,
.caret::after {
  content: "";
  border: 6px solid transparent;
  border-top: 6px solid #e0e0e0;
  border-bottom: none;
}

.tools {
  height: 34px;
  overflow: hidden;
}

.group.first {
  width: 343px;
}

.first .more {
  margin-left: auto;
}

.group .more {
  width: 16px;
}

.group .more::after {
  margin-top: 20px;
}

.group.views {
  width: 460px;
}

.push {
  margin-left: auto;
}

.modify {
  width: 342px;
  height: 34px;
  color: #808283;
  --green: #22b394;
}

/* workspace */
.workspace {
  flex: 1;
  min-height: 0;
  display: grid;
  grid-template-columns: 300px 1fr 262px;
}

.side {
  display: flex;
  flex-direction: column;
  min-width: 0;
  min-height: 0;
  background: #252728;
  overflow: hidden;
}

.panel > header {
  display: flex;
  align-items: center;
  gap: 6px;
  height: 22px;
  padding: 0 8px 0 13px;
  background: #1b1b1c;
}

.panel h2 {
  flex: 1;
  font: 12px "Noto Sans", sans-serif;
}

.panel header svg {
  width: 10px;
  height: 10px;
  color: #d8d8d8;
}

.filter {
  display: flex;
  align-items: center;
  height: 24px;
  padding: 0 8px 0 4px;
  background: #1b1b1c;
}

.columns {
  display: flex;
  height: 22px;
  padding: 0 4px;
  background: #2e3030;
  font: 12px/24px "Noto Sans", sans-serif;
}

.cim .columns {
  height: 21px;
}

.object .columns {
  height: 24px;
}

.columns .status {
  width: 52px;
  margin-left: auto;
  margin-right: 12px;
  border-right: 1px solid #3a3c3c;
}

.left .tree {
  background: #1e1f1f;
}

.tree li {
  display: flex;
  align-items: center;
  height: 22px;
  white-space: nowrap;
}

.tree svg {
  width: 16px;
  height: 16px;
  margin-right: 5px;
  color: #c8c8c8;
}

.tree svg.toggle {
  width: 9px;
  height: 9px;
  margin-right: 10px;
}

.tree .mode {
  padding-left: 33px;
  color: #b93a20;
}

.left .tree .mode,
.left .tree .l1 {
  background: #252728;
}

.tree .l1 {
  padding-left: 5px;
}

.tree .l2 {
  padding-left: 17px;
}

.tree .l3 {
  padding-left: 29px;
}

.tree .l4 {
  padding-left: 60px;
}

.left .tree.plain {
  background: none;
  padding: 2px 0 0 12px;
}

.cim {
  flex: 0 0 438px;
}

.object,
.properties {
  flex: 1;
  border-top: 1px solid #111;
}

.right {
  border-left: 1px solid #333536;
}

.right .tree {
  padding-top: 2px;
}

.right .tree .mode {
  padding-left: 11px;
}

.right .tree .l2 {
  padding-left: 35px;
}

.modes {
  display: flex;
  margin-left: 29px;
}

.modes svg {
  height: 20px;
}

/* drawing area */
.drawing {
  display: flex;
  flex-direction: column;
  min-width: 0;
  padding: 2px 2px 0 2px;
  border-bottom: 5px solid #252728;
}

.tabs {
  display: flex;
  height: 22px;
}

.tab {
  display: flex;
  align-items: center;
  gap: 11px;
  width: 66px;
  padding-left: 5px;
  border-left: 3px solid #22a88a;
  background: #343536;
  font-size: 12px;
  font-weight: bold;
}

.tab svg,
.add svg {
  width: 11px;
  height: 11px;
}

.add {
  width: 21px;
  background: #2a2b2c;
  color: #d8d8d8;
}

.tabs .caret {
  margin-left: auto;
  width: 18px;
}

.canvas {
  flex: 1;
  display: flex;
  align-items: flex-end;
  border-top: 3px solid #c4c4c4;
  border-left: 3px solid #c4c4c4;
  background-color: #000;
  background-image:
    linear-gradient(90deg, #202020 1px, transparent 1px),
    linear-gradient(#202020 1px, transparent 1px),
    linear-gradient(90deg, transparent 11px, #0d0d0d 11px 12px, transparent 12px 23px, #0d0d0d 23px 24px, transparent 24px 34px, #0d0d0d 34px 35px, transparent 35px 46px, #0d0d0d 46px 47px, transparent 47px),
    linear-gradient(transparent 11px, #0d0d0d 11px 12px, transparent 12px 23px, #0d0d0d 23px 24px, transparent 24px 34px, #0d0d0d 34px 35px, transparent 35px 46px, #0d0d0d 46px 47px, transparent 47px);
  background-size: 57px 57px;
  background-position: 10px 10px;
}

.command {
  display: flex;
  width: 615px;
  height: 36px;
  margin-left: -3px;
  margin-bottom: -3px;
  background: #17181a;
  border: 1px solid #292b2c;
}

.handle {
  display: flex;
  gap: 10px;
  width: 33px;
  padding: 6px 5px;
  background: #252728;
}

.dots {
  width: 2px;
  height: 14px;
  background: repeating-linear-gradient(#d0d0d0 0 3px, transparent 3px 5px);
}

.bars {
  width: 12px;
  height: 12px;
  background: repeating-linear-gradient(#d0d0d0 0 2px, transparent 2px 5px);
}

.command label {
  display: flex;
  align-items: center;
  gap: 8px;
  padding-left: 7px;
}

.command svg {
  width: 16px;
  height: 16px;
  background: #d0d0d0;
  border-radius: 2px;
  color: #222;
}

.command input {
  flex: 1;
}

.canvas .status {
  display: flex;
  align-items: center;
  gap: 4px;
  margin-left: auto;
}

.status output {
  width: 181px;
  height: 26px;
  border-radius: 4px;
  background: #252728;
  text-align: center;
  font: 12px/28px "Noto Sans", sans-serif;
}

.status button {
  display: grid;
  grid-template-columns: 8px 8px;
  gap: 2px;
  width: 30px;
  height: 30px;
  align-content: center;
  background: #252728;
}

.status button i {
  height: 8px;
  border-radius: 1px;
  background: #eee;
}

.pager {
  display: flex;
  gap: 2px;
  height: 25px;
  padding: 4px 0 2px 3px;
}

.pager button {
  width: 20px;
  background: #2d2e30;
}

.pager svg {
  width: 12px;
  height: 12px;
}

.track {
  width: 21px;
  background: #2d2e30;
  border-left: 2px solid #555;
}

/* properties */
.cad {
  flex: 0 0 429px;
}

.selection {
  display: flex;
  align-items: center;
  height: 26px;
  background: #1b1b1c;
}

.selection label {
  display: flex;
  align-items: center;
  width: 196px;
  padding: 0 6px 0 4px;
  flex: none;
}

.selection button {
  width: 26px;
  height: 26px;
  background: #252728;
}

.selection svg {
  width: 18px;
  height: 18px;
  color: #d0d0d0;
}

.properties table {
  width: 100%;
  table-layout: fixed;
  border-collapse: collapse;
  white-space: nowrap;
}

.gutter {
  width: 26px;
}

.name {
  width: 127px;
}

.properties tr {
  height: 25px;
  background: #292a2a;
  border-bottom: 1px solid #252728;
}

.properties tr.group-head {
  background: #252728;
  color: #dcdcdc;
}

.properties th {
  font-weight: normal;
  text-align: left;
  padding-left: 2px;
}

.properties .group-head th {
  font-weight: bold;
}

.properties td:first-child {
  padding-left: 8px;
  background: #252728;
}

.properties td svg {
  display: block;
  width: 10px;
  height: 10px;
}

.properties td .swatch {
  display: inline-block;
  width: 14px;
  height: 14px;
  margin-right: 8px;
  vertical-align: middle;
}

.properties td .stroke {
  display: inline-block;
  width: 60px;
  margin-right: 8px;
  vertical-align: middle;
}

.properties td .thick {
  height: 3px;
  background: #777;
}

.readonly tr:not(.group-head) {
  color: #7c7e7e;
}
```
